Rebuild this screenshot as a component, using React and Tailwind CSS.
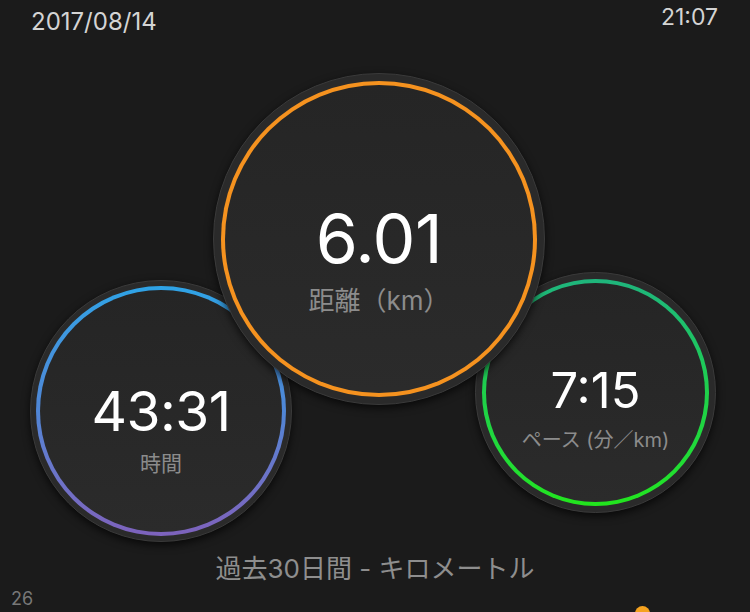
import React from "react";

const FONT = { fontFamily: '"Inter", "Noto Sans CJK JP", sans-serif' };

// Anillo de métrica: borde oscuro, aro de color en degradado y centro gris.
function Metrica({ className, ring, pad, valor, label, valorCls, labelCls }) {
  return (
    <div
      className={`absolute rounded-full bg-[#2a2a2a] border border-[#3a3a3a] shadow-[0_3px_8px_rgba(0,0,0,0.7)] ${className}`}
    >
      <div className={`h-full w-full rounded-full p-[4px] ${ring}`}>
        <div
          className={`flex h-full w-full flex-col items-center rounded-full bg-linear-to-b from-[#252525] to-[#2b2b2b] ${pad}`}
        >
          <div className={`leading-none text-white ${valorCls}`}>{valor}</div>
          <div className={`leading-none whitespace-nowrap text-[#8c8c8c] ${labelCls}`}>{label}</div>
        </div>
      </div>
    </div>
  );
}

export default function App() {
  return (
    <div className="flex h-[612px] w-[750px] flex-col overflow-hidden bg-[#1b1b1b]" style={FONT}>
      <div className="flex h-[45px] items-start justify-between pl-[31px] pr-[32px] pt-[6px] leading-none text-[#d4d4d4]">
        <span className="mt-[4px] text-[24px]">2017/08/14</span>
        <span className="text-[23px]">21:07</span>
      </div>

      <div className="relative h-[500px]">
        <Metrica
          className="left-[30px] top-[235px] h-[262px] w-[262px] p-[5px]"
          ring="bg-linear-to-b from-[#2ea3e6] via-[#4f86d6] to-[#7d62bc]"
          pad="pt-[94px]"
          valor="43:31"
          label="時間"
          valorCls="text-[55px] tracking-[-0.5px]"
          labelCls="text-[21px] mt-[14px]"
        />
        <Metrica
          className="left-[475px] top-[227px] h-[241px] w-[241px] p-[6px]"
          ring="bg-linear-to-b from-[#1fb57c] via-[#1fd04a] to-[#22e51c]"
          pad="pt-[83px]"
          valor="7:15"
          label="ペース (分／km)"
          valorCls="text-[49px]"
          labelCls="text-[20px] mt-[15px]"
        />
        <Metrica
          className="left-[213px] top-[28px] h-[332px] w-[332px] p-[7px] z-10"
          ring="bg-[#f5921f]"
          pad="pt-[119px]"
          valor="6.01"
          label="距離（km）"
          valorCls="text-[68px] tracking-[-0.5px]"
          labelCls="text-[26px] mt-[16px]"
        />
      </div>

      <div className="mt-[11px] text-center text-[26px] leading-none text-[#8e8e8e]">
        過去30日間 - キロメートル
      </div>
      <div className="relative mt-[8px] pl-[11px] leading-none">
        <span className="text-[18px] text-[#777777]">26</span>
        <span className="absolute left-[635px] top-[16px] h-[15px] w-[15px] rounded-full bg-[#f5a21f]" />
      </div>
    </div>
  );
}
